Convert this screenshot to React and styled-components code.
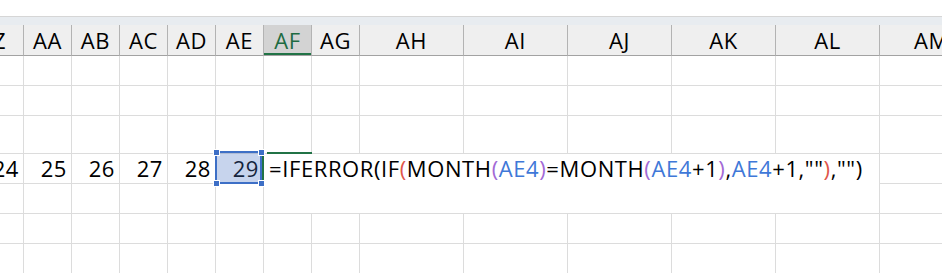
import React from "react";
import styled, { createGlobalStyle } from "styled-components";

const GlobalStyle = createGlobalStyle`
  html, body { margin: 0; padding: 0; background: #ffffff; }
  body { font-family: "Open Sans", "Noto Sans CJK SC", sans-serif; }
`;

const COLS = ["Z","AA","AB","AC","AD","AE","AF","AG","AH","AI","AJ","AK","AL","AM"];
const TEMPLATE = "repeat(8, 48px) repeat(6, 104px)";
const ROWS = [30, 30, 38, 30, 30, 30, 30];
const VALUES = { 3: { Z: 24, AA: 25, AB: 26, AC: 27, AD: 28, AE: 29 } };

const Page = styled.div`
  position: relative;
  width: 942px;
  height: 273px;
  overflow: hidden;
  background: #fff;
  font-size: 22px;
  letter-spacing: 0.6px;
  color: #000;
`;

const TopSpace = styled.div`
  height: 16px;
  background: #fff;
`;

const Band = styled.div`
  height: 8px;
  border-top: 1px solid #d6d6d6;
  background: #e8ecf0;
`;

const HeaderRow = styled.div`
  display: grid;
  grid-template-columns: ${TEMPLATE};
  margin-left: -24px;
  height: 31px;
`;

const HeaderCell = styled.div`
  box-sizing: border-box;
  height: 31px;
  line-height: 30px;
  text-align: center;
  border-right: 1px solid #b3b3b3;
  border-bottom: 1px solid #a2a2a2;
  background: ${(p) => (p.$active ? "#d3d3d3" : "#efefef")};
  color: ${(p) => (p.$active ? "#1e6b42" : "#000")};
  box-shadow: ${(p) => (p.$active ? "inset 0 -2px 0 #217346" : "none")};
  white-space: nowrap;
`;

const Body = styled.div`
  display: grid;
  grid-template-columns: ${TEMPLATE};
  grid-template-rows: ${ROWS.map((r) => r + "px").join(" ")};
  margin-left: -24px;
`;

const Cell = styled.div`
  box-sizing: border-box;
  border-right: 1px solid #dcdcdc;
  border-bottom: 1px solid #dcdcdc;
  text-align: right;
  padding-right: 4px;
  line-height: 29px;
  white-space: nowrap;
`;

const Selection = styled.div`
  position: absolute;
  left: 215px;
  top: 151px;
  width: 47px;
  height: 33px;
  box-sizing: border-box;
  border: 2px solid #3d6fc6;
  background: rgba(68, 114, 196, 0.3);
`;

const Handle = styled.span`
  position: absolute;
  width: 5px;
  height: 5px;
  background: #3d6fc6;
  outline: 1px solid #fff;
  ${(p) => (p.$top ? "top: -3.5px;" : "bottom: -3.5px;")}
  ${(p) => (p.$left ? "left: -3.5px;" : "right: -3.5px;")}
`;

const ActiveTop = styled.div`
  position: absolute;
  left: 267px;
  top: 152px;
  width: 45px;
  height: 2px;
  background: #217346;
`;

const ActiveLeft = styled.div`
  position: absolute;
  left: 262px;
  top: 156px;
  width: 2px;
  height: 24px;
  background: #217346;
`;

const Editor = styled.div`
  position: absolute;
  left: 264px;
  top: 154px;
  width: 615px;
  height: 59px;
  background: #fff;
  padding-left: 5px;
  box-sizing: border-box;
  line-height: 29px;
  white-space: nowrap;
`;

const Tok = styled.span`
  color: ${(p) => p.$c || "#000"};
`;

const BLUE = "#3f78d8";
const PURPLE = "#a36ad6";
const RED = "#e0564b";

const FORMULA = [
  ["=IFERROR(IF"],
  ["(", RED],
  ["MONTH"],
  ["(", PURPLE],
  ["AE4", BLUE],
  [")", PURPLE],
  ["=MONTH"],
  ["(", PURPLE],
  ["AE4", BLUE],
  ["+1"],
  [")", PURPLE],
  [","],
  ["AE4", BLUE],
  ['+1,""'],
  [")", RED],
  [',"")'],
];

export default function App() {
  return (
    <>
      <GlobalStyle />
      <Page>
        <TopSpace />
        <Band />
        <HeaderRow>
          {COLS.map((c) => (
            <HeaderCell key={c} $active={c === "AF"}>
              {c}
            </HeaderCell>
          ))}
        </HeaderRow>
        <Body>
          {ROWS.map((_, r) =>
            COLS.map((c) => (
              <Cell key={r + c}>{VALUES[r] && VALUES[r][c] !== undefined ? VALUES[r][c] : ""}</Cell>
            ))
          )}
        </Body>
        <Selection>
          <Handle $top $left />
          <Handle $top />
          <Handle $left />
          <Handle />
        </Selection>
        <ActiveTop />
        <ActiveLeft />
        <Editor>
          {FORMULA.map(([t, c], i) => (
            <Tok key={i} $c={c}>
              {t}
            </Tok>
          ))}
        </Editor>
      </Page>
    </>
  );
}
